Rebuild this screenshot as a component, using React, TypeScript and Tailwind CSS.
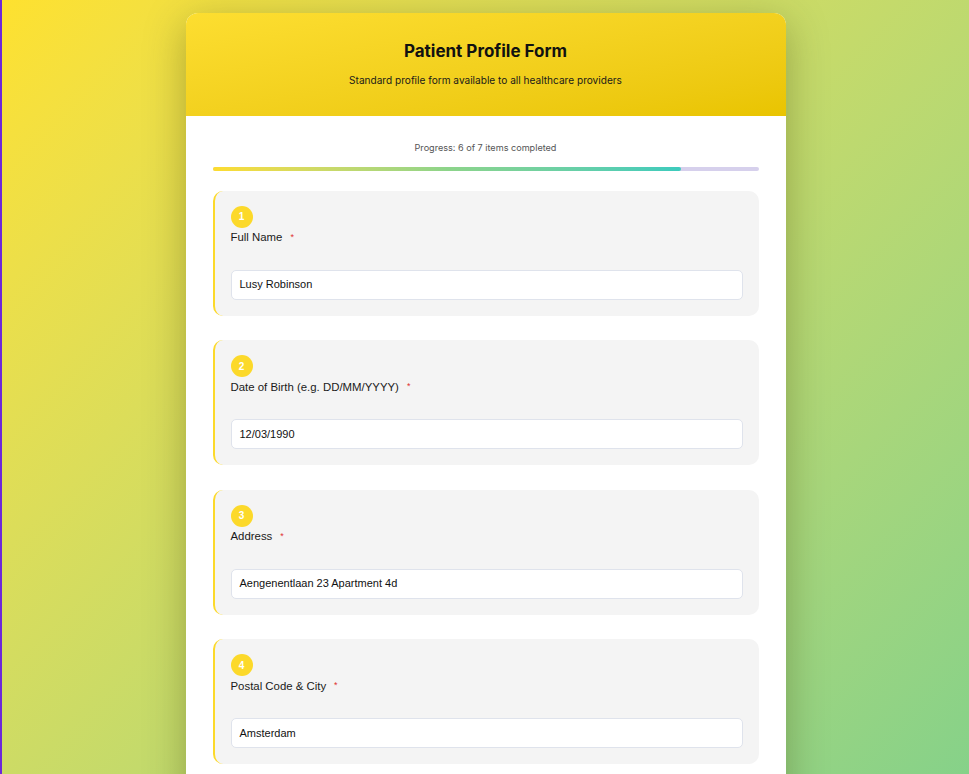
const fields = [
  { label: 'Full Name', value: 'Lusy Robinson' },
  { label: 'Date of Birth (e.g. DD/MM/YYYY)', value: '12/03/1990' },
  { label: 'Address', value: 'Aengenentlaan 23 Apartment 4d' },
  { label: 'Postal Code & City', value: 'Amsterdam' },
  { label: 'Phone Number', value: '+31 6 12345678' },
];

const FieldCard = ({ index, label, value }: { index: number; label: string; value: string }) => (
  <div className="rounded-[10px] border-l-2 border-[#fcd92a] bg-[#f4f4f4] pl-[16px] pr-[16px] pt-[15px] pb-[16px]">
    <div className="flex h-[22px] w-[22px] items-center justify-center rounded-full bg-[#fcd92a] text-[10px] font-bold text-white">
      {index}
    </div>
    <div className="flex h-[20px] items-center text-[11.4px] text-[#1a1a1a]">
      {label}
      <span className="ml-[8px] text-[9px] text-[#e03131]">*</span>
    </div>
    <div className="mt-[22px] flex h-[30px] items-center rounded-[5px] border border-[#dfe3ec] bg-white px-[8px] text-[11px] text-[#111]">
      {value}
    </div>
  </div>
);

export default function App() {
  return (
    <div
      className="min-h-screen border-l-2 border-[#6d28d9] bg-gradient-to-br from-[#fee12f] to-[#74cf8f] pt-[13px] pb-10"
      style={{ fontFamily: '"Liberation Sans", Arial, sans-serif' }}
    >
      <div className="mx-auto w-[600px] overflow-hidden rounded-[12px] bg-white shadow-[0_10px_40px_rgba(60,60,0,0.35)]">
        <div
          className="flex h-[103px] flex-col items-center bg-gradient-to-br from-[#fdde30] to-[#e9c400] pt-[26px]"
          style={{ fontFamily: 'Inter, "Liberation Sans", sans-serif' }}
        >
          <h1 className="text-[17px] font-bold text-[#111]">Patient Profile Form</h1>
          <p className="mt-[8px] text-[10.1px] text-[#1a1a1a]">Standard profile form available to all healthcare providers</p>
        </div>
        <div className="px-[27px] pt-[25px]">
          <p
            className="text-center text-[9.1px] text-[#555]"
            style={{ fontFamily: 'Inter, "Liberation Sans", sans-serif' }}
          >
            Progress: 6 of 7 items completed
          </p>
          <div className="mt-[12px] h-[4px] w-full rounded-full bg-[#d6d0ec]">
            <div
              className="h-full rounded-full bg-gradient-to-r from-[#fddc2e] via-[#8dd48a] to-[#3ccbbd]"
              style={{ width: `${(6 / 7) * 100}%` }}
            />
          </div>
          <div className="mt-[20px] flex flex-col gap-[24.5px] pb-6">
            {fields.map((f, i) => (
              <FieldCard key={f.label} index={i + 1} label={f.label} value={f.value} />
            ))}
          </div>
        </div>
      </div>
    </div>
  );
}
